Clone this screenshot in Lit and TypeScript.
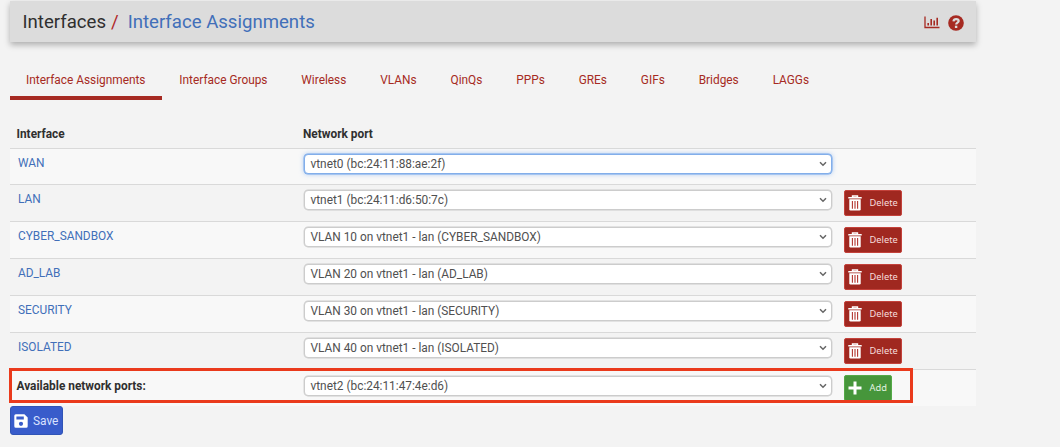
import { LitElement, html, css, nothing, svg } from "lit";
import { customElement } from "lit/decorators.js";
import { classMap } from "lit/directives/class-map.js";

interface Assignment {
  name: string;
  port: string;
  action?: "delete" | "add";
  focused?: boolean;
}

const TABS = ["Interface Assignments", "Interface Groups", "Wireless", "VLANs", "QinQs", "PPPs", "GREs", "GIFs", "Bridges", "LAGGs"];

const ROWS: Assignment[] = [
  { name: "WAN", port: "vtnet0 (bc:24:11:88:ae:2f)", focused: true },
  { name: "LAN", port: "vtnet1 (bc:24:11:d6:50:7c)", action: "delete" },
  { name: "CYBER_SANDBOX", port: "VLAN 10 on vtnet1 - lan (CYBER_SANDBOX)", action: "delete" },
  { name: "AD_LAB", port: "VLAN 20 on vtnet1 - lan (AD_LAB)", action: "delete" },
  { name: "SECURITY", port: "VLAN 30 on vtnet1 - lan (SECURITY)", action: "delete" },
  { name: "ISOLATED", port: "VLAN 40 on vtnet1 - lan (ISOLATED)", action: "delete" },
];

const icon = (w: number, h: number, body: unknown) =>
  html`<svg width=${w} height=${h} viewBox="0 0 ${w} ${h}" aria-hidden="true">${body}</svg>`;

const chartIcon = icon(16, 13, svg`<path d="M1 .5V11.5H15.5" fill="none" stroke="currentColor" stroke-width="1.3"/><path d="M4.2 9.5V7M7.2 9.5V3M10.2 9.5V4.5M13.2 9.5V1.8" stroke="currentColor" stroke-width="1.6"/>`);
const helpIcon = icon(16, 16, svg`<circle cx="8" cy="8" r="7.8" fill="currentColor"/><path d="M5.5 6.3C5.7 4.7 6.7 4.1 8.1 4.1C9.6 4.1 10.7 4.9 10.7 6.1C10.7 7.7 8.2 7.7 8.2 9.5" fill="none" stroke="#dcdcdc" stroke-width="2.2"/><rect x="6.9" y="10.7" width="2.4" height="2.3" fill="#dcdcdc"/>`);
const trashIcon = icon(14, 16, svg`<path d="M.3 2.7H13.7M4.6 2.2V1H9.4V2.2" fill="none" stroke="#fff" stroke-width="1.6"/><path d="M1.3 4.2H12.7V14.2Q12.7 15.6 11.4 15.6H2.6Q1.3 15.6 1.3 14.2Z" fill="#fff"/><path d="M4.4 6V13.8M7 6V13.8M9.6 6V13.8" stroke="#b3362f" stroke-width="1.1"/>`);
const plusIcon = icon(14, 14, svg`<path d="M7 .5V13.5M.5 7H13.5" stroke="#fff" stroke-width="3"/>`);
const saveIcon = icon(14, 14, svg`<path fill="#fff" fill-rule="evenodd" d="M1.8.3H10.4L13.7 3.6V12.2Q13.7 13.7 12.2 13.7H1.8Q.3 13.7.3 12.2V1.8Q.3.3 1.8.3ZM2.4 2.5V5.5H9.8V2.5ZM7 7.7A2.1 2.1 0 1 0 7 11.9A2.1 2.1 0 1 0 7 7.7Z"/>`);
const chevron = icon(8, 6, svg`<path d="M1 1.2L4 4.2L7 1.2" fill="none" stroke="#666" stroke-width="1.5"/>`);

@customElement("app-root")
export class AppRoot extends LitElement {
  static styles = css`
    :host { display: block; box-sizing: border-box; height: 447px; overflow: hidden; background: #f3f3f3; padding: 1px 84px 0 10px; font-family: Roboto, sans-serif; font-size: 11.87px; color: #2f2f2f; }
    * { box-sizing: border-box; }
    svg { display: block; flex: none; }
    .head { height: 41px; display: flex; align-items: center; padding: 0 12.5px; background: #dcdcdc; box-shadow: 0 3px 6px rgba(0,0,0,.28); font-size: 18.6px; }
    .slash { color: #b0282a; margin: 0 9px 0 5px; }
    .page { color: #416fb9; flex: 1; }
    .tools { display: flex; align-items: center; gap: 8px; color: #a62a22; padding-top: 2px; }
    .tabs { display: flex; gap: 1.7px; margin-top: 18px; height: 40px; }
    .tab { padding: 0 16.1px; line-height: 40px; color: #a62a22; white-space: nowrap; }
    .tab.active { border-bottom: 4px solid #a62a22; }
    .table { margin-top: 18px; }
    .row { display: grid; grid-template-columns: 294px 528px 1fr; height: 37px; border-top: 1px solid #d9d9d9; }
    .row.first { height: 36px; }
    .row.striped { background: #f8f8f8; }
    .row.columns { grid-template-columns: 293px 1fr; height: 30px; border: 0; font-weight: 700; line-height: 33px; }
    .columns div:first-child { padding-left: 6.5px; }
    .name { color: #416fb9; padding: 6px 0 0 8px; line-height: 17px; }
    .name.available { color: #2f2f2f; font-weight: 700; padding: 8px 0 0 6.5px; }
    .select { width: 528px; height: 20px; margin-top: 5px; border: 1px solid #ccc; border-radius: 4px; background: #fff; display: flex; align-items: center; justify-content: space-between; padding: 0 4px 0 5.5px; color: #505050; line-height: 18px; box-shadow: 0 0 0 .4px #ccc; white-space: pre; }
    .select.focused { border-color: #82aeea; box-shadow: 0 0 5px rgba(102,160,240,.6), 0 0 0 .5px #82aeea; }
    .last .select { margin-top: 6px; }
    .action { padding: 5px 0 0 11.5px; }
    .btn { display: inline-flex; align-items: center; height: 26px; border: 1px solid #c4423b; border-radius: 2px; background: #a02820; color: #f7dedd; font: 9.3px "Noto Sans", sans-serif; padding: 0 3px 1px; gap: 8px; white-space: nowrap; }
    .delete { width: 58.5px; }
    .add { width: 48px; border-color: #55aa48; background: #46963b; color: #e3f3e0; }
    .save { width: 53px; height: 29px; border-color: #3054b6; border-radius: 3px; background: #385ccb; color: #d9e2ff; font: 11.87px Roboto, sans-serif; gap: 5px; padding: 1px 3px 0; }
    .last { position: relative; }
    .marker { position: absolute; left: -1px; top: -2px; width: 904px; height: 35px; border: 3px solid #ea3a1c; }
  `;

  private row(r: Assignment, i: number, last = false) {
    return html`<div class=${classMap({ row: true, striped: i % 2 === 0, first: i === 0, last })}>
      <div class=${classMap({ name: true, available: last })}>${r.name}</div>
      <div class=${classMap({ select: true, focused: !!r.focused })}><span>${r.port}</span>${chevron}</div>
      <div class="action">${r.action === "delete"
        ? html`<div class="btn delete">${trashIcon}<span>Delete</span></div>`
        : r.action === "add" ? html`<div class="btn add">${plusIcon}<span>Add</span></div>` : nothing}</div>
      ${last ? html`<div class="marker"></div>` : nothing}
    </div>`;
  }

  render() {
    return html`
      <div class="head"><span>Interfaces</span><span class="slash">/</span><span class="page">Interface Assignments</span>
        <div class="tools">${chartIcon}${helpIcon}</div></div>
      <div class="tabs">${TABS.map((t, i) => html`<div class=${classMap({ tab: true, active: i === 0 })}>${t}</div>`)}</div>
      <div class="table">
        <div class="row columns"><div>Interface</div><div>Network port</div></div>
        ${ROWS.map((r, i) => this.row(r, i))}
        ${this.row({ name: "Available network ports:", port: "vtnet2 (bc:24:11:47:4e:d6)", action: "add" }, 6, true)}
      </div>
      <div class="btn save">${saveIcon}<span>Save</span></div>
    `;
  }
}
